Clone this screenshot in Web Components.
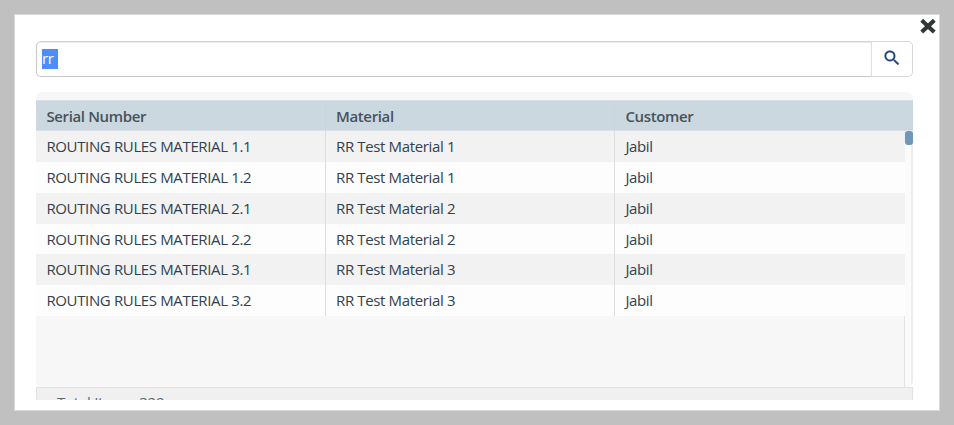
<!DOCTYPE html>
<html lang="en">
<head>
<meta charset="utf-8">
<title>Serial number search</title>
<style>
  html, body { margin: 0; height: 100%; overflow: hidden; background: #c0c0c0; }
  body { font-family: "Open Sans", "Noto Sans", sans-serif; font-size: 15px; letter-spacing: -0.36px; color: #30424f; }
</style>
</head>
<body>
<modal-dialog>
  <search-box value="rr"></search-box>
  <data-table></data-table>
</modal-dialog>
<script>
class ModalDialog extends HTMLElement {
  constructor() {
    super();
    this.attachShadow({ mode: "open" }).innerHTML = `
      <style>
        :host { display: block; position: relative; box-sizing: border-box; width: 926px; height: 397px;
          margin: 14px 0 0 14px; border: 1px solid #d9d9d9; background: #fff; padding: 26px 26px 10px 21px; }
        .body { height: 359px; overflow: hidden; display: flex; flex-direction: column; gap: 15px; }
        button { position: absolute; top: 3px; right: 3px; width: 16px; height: 16px; padding: 0; border: 0; background: none; }
        svg { display: block; }
      </style>
      <button aria-label="Close"><svg width="16" height="16" viewBox="0 0 16 16">
        <path d="M3.2 3.7L12.8 12.7M12.8 3.7L3.2 12.7" stroke="#323735" stroke-width="4.1" stroke-linecap="square" stroke-linejoin="round"/>
      </svg></button>
      <div class="body"><slot></slot></div>`;
  }
}
customElements.define("modal-dialog", ModalDialog);

class SearchBox extends HTMLElement {
  connectedCallback() {
    this.attachShadow({ mode: "open" }).innerHTML = `
      <style>
        :host { display: flex; box-sizing: border-box; width: 877px; height: 36px; flex: none; }
        .field { box-sizing: border-box; width: 836px; border: 1px solid #c8c8c8; border-top-color: #d2d2d2;
          border-right-color: #dedede; border-radius: 5px 0 0 5px; padding: 7px 5px; box-shadow: inset 0 1px 1px #e8e8e8; }
        .field span { display: block; width: 15.5px; height: 20px; line-height: 19px; background: #4a8dfb; color: #fff; }
        .go { box-sizing: border-box; flex: 1; display: flex; align-items: center; justify-content: center;
          border: 1px solid #d8d8d8; border-left: 0; border-radius: 0 5px 5px 0; padding: 0 0 2px; }
      </style>
      <div class="field"><span></span></div>
      <div class="go"><svg width="20" height="20" viewBox="0 0 24 24" fill="#1d4377" stroke="#1d4377" stroke-width=".3">
        <path d="M15.5 14h-.79l-.28-.27A6.471 6.471 0 0 0 16 9.5 6.5 6.5 0 1 0 9.5 16c1.61 0 3.09-.59 4.23-1.57l.27.28v.79l5 4.99L20.49 19l-4.99-5zm-6 0C7.01 14 5 11.99 5 9.5S7.01 5 9.5 5 14 7.01 14 9.5 11.99 14 9.5 14z"/>
      </svg></div>`;
    this.shadowRoot.querySelector("span").textContent = this.getAttribute("value");
  }
}
customElements.define("search-box", SearchBox);

class DataTable extends HTMLElement {
  connectedCallback() {
    const rows = [
      ["ROUTING RULES MATERIAL 1.1", "RR Test Material 1", "Jabil"],
      ["ROUTING RULES MATERIAL 1.2", "RR Test Material 1", "Jabil"],
      ["ROUTING RULES MATERIAL 2.1", "RR Test Material 2", "Jabil"],
      ["ROUTING RULES MATERIAL 2.2", "RR Test Material 2", "Jabil"],
      ["ROUTING RULES MATERIAL 3.1", "RR Test Material 3", "Jabil"],
      ["ROUTING RULES MATERIAL 3.2", "RR Test Material 3", "Jabil"]
    ];
    const line = c => c.map(t => `<span>${t}</span>`).join("");
    this.attachShadow({ mode: "open" }).innerHTML = `
      <style>
        :host { display: block; width: 877px; flex: none; }
        .panel { box-sizing: border-box; height: 295px; padding-top: 8px; border-radius: 6px; background: #f7f7f7; overflow: hidden; }
        .row { display: grid; grid-template-columns: 289.6px 289.4px 1fr; width: 869px; height: 30.75px; line-height: 31px; white-space: nowrap; }
        .row span { box-sizing: border-box; padding-left: 10.4px; border-right: 1px solid #dedede; }
        .row span:last-child { border-right: 0; }
        .row:nth-child(odd) { background: #f2f2f2; }
        .row:nth-child(even) { background: #fdfdfd; }
        .head.row { box-sizing: border-box; width: 877px; height: 31.4px; line-height: 30px; background: #ccd8e0; font-weight: 600; color: #46535b;
          border-top: 1px solid #dae2e7; border-bottom: 1px solid #dae2e7; }
        .head.row span { border-color: #cdd3dd; }
        .view { display: flex; height: 255.6px; }
        .rows { width: 868px; flex: none; border-right: 1px solid #e3e3e3; }
        .track { flex: 1; min-width: 0; box-sizing: border-box; background: #fbfbfb; border-right: 2px solid #ededed; }
        .thumb { width: 8px; height: 14px; border-radius: 3px; background: #6d98b9; }
        .foot { box-sizing: border-box; height: 40px; border: 1px solid #e2e2e2; background: #f0f0f0;
          padding: 4px 20px; line-height: 20px; letter-spacing: -0.25px; color: #5a6872; }
      </style>
      <div class="panel">
        <div class="row head">${line(["Serial Number", "Material", "Customer"])}</div>
        <div class="view">
          <div class="rows">${rows.map(r => `<div class="row">${line(r)}</div>`).join("")}</div>
          <div class="track"><div class="thumb"></div></div>
        </div>
      </div>
      <div class="foot">Total Items: 329</div>`;
  }
}
customElements.define("data-table", DataTable);
</script>
</body>
</html>
